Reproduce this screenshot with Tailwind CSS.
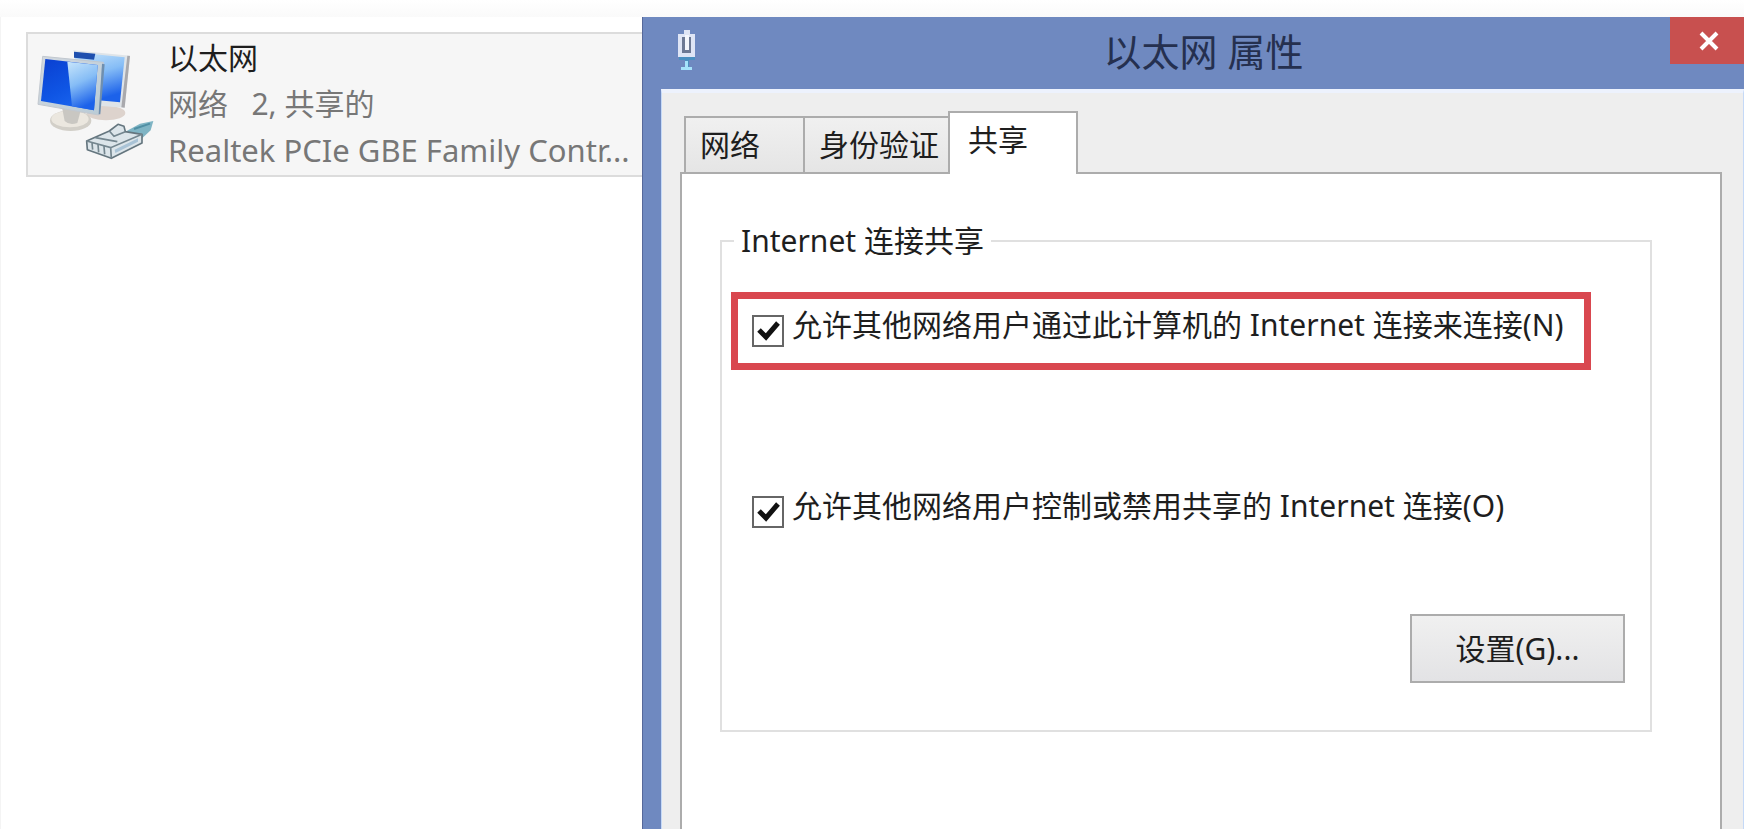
<!DOCTYPE html>
<html lang="zh-CN">
  <head>
    <meta charset="UTF-8" />
    <meta name="viewport" content="width=device-width, initial-scale=1.0" />
    <script src="https://cdn.jsdelivr.net/npm/@tailwindcss/browser@4"></script>
    <title>以太网 属性</title>
  </head>
  <body
    class="flex h-screen flex-col overflow-hidden bg-white font-['Noto_Sans','Noto_Sans_CJK_SC',sans-serif] text-[30px] leading-[46px] text-[#1e1e1e]"
  >
    <div class="h-[17px] shrink-0 bg-linear-to-b from-white to-[#fafafa]"></div>
    <div class="flex min-h-0 flex-1">
      <!-- Network connections -->
      <aside class="w-[642px] shrink-0 border-l border-[#f4f4f4] pt-[15px] pl-[25px]">
        <div
          class="flex items-center gap-2 border-2 border-r-0 border-[#dcdcdc] bg-[#f6f6f6] pt-px pb-[2px] pl-[2px]"
        >
          <svg class="size-[130px] shrink-0" viewBox="0 0 390 390" aria-hidden="true">
            <defs>
              <linearGradient id="screen" x1="0" y1="0" x2="0.6" y2="1">
                <stop offset="0" stop-color="#0a3fd0" />
                <stop offset="0.6" stop-color="#0f55e4" />
                <stop offset="1" stop-color="#1a66f0" />
              </linearGradient>
              <linearGradient id="glare" x1="0" y1="0" x2="0.3" y2="1">
                <stop offset="0" stop-color="#c9e6fb" />
                <stop offset="0.5" stop-color="#86bdf6" />
                <stop offset="1" stop-color="#1c62ea" />
              </linearGradient>
              <linearGradient id="frame" x1="0" y1="0" x2="1" y2="1">
                <stop offset="0" stop-color="#d3d9e0" />
                <stop offset="1" stop-color="#b9cbd6" />
              </linearGradient>
            </defs>
            <ellipse cx="228" cy="222" rx="58" ry="22" fill="#ddd3cd" />
            <path d="M130 34 L300 50 L284 206 L205 200 Z" fill="#dfe4e8" />
            <path d="M292 50 L300 51 L284 206 L274 205 Z" fill="#a9a9ad" />
            <path d="M134 40 L284 55 L270 190 L205 184 L134 100 Z" fill="url(#glare)" />
            <path d="M132 38 L196 44 L192 62 L132 56 Z" fill="#1e4fae" />
            <ellipse cx="122" cy="245" rx="62" ry="31" fill="#d2cfc8" />
            <ellipse cx="120" cy="240" rx="56" ry="25" fill="#ebe7df" />
            <path d="M96 205 L152 215 L142 252 Q118 260 104 246 Z" fill="#c9c7c2" />
            <path
              d="M38 52 L220 70 L206 228 L24 196 Z"
              fill="url(#frame)"
              stroke="#c2c8cf"
              stroke-width="3"
            />
            <path d="M46 60 L203 78 L192 214 L33 186 Z" fill="url(#screen)" />
            <path d="M112 68 L203 78 L192 214 L126 202 Z" fill="url(#glare)" />
            <path d="M216 74 L224 76 L211 226 L206 226 Z" fill="#6f8faf" />
            <path d="M290 276 L330 254 L370 246 L362 274 L330 304 Z" fill="#7fb4c4" />
            <path d="M312 270 L360 254" stroke="#4f8fa4" stroke-width="6" fill="none" />
            <path
              d="M170 306 L238 276 L264 256 L282 262 L286 278 L336 286 L336 312 L244 358 L172 332 Z"
              fill="#dce5ea"
              stroke="#65767f"
              stroke-width="5"
              stroke-linejoin="round"
            />
            <path
              d="M170 306 L242 326 L336 286 M242 326 L244 358 M238 276 L252 292 L286 278 M196 296 L262 308 M186 312 L188 332 M204 316 L206 340 M222 322 L224 346"
              fill="none"
              stroke="#74868f"
              stroke-width="5"
            />
            <path d="M254 332 L324 298 L324 308 L256 342 Z" fill="#a9c3d6" />
          </svg>
          <div class="min-w-0 text-[#777777]">
            <h2 class="text-[#1e1e1e]">以太网</h2>
            <p class="whitespace-pre">网络   2, 共享的</p>
            <p class="text-[31px] whitespace-nowrap">Realtek PCIe GBE Family Contr...</p>
          </div>
        </div>
      </aside>

      <!-- Properties dialog -->
      <section class="flex min-w-0 flex-1 flex-col border-l border-[#56689a] bg-[#6f89c0]">
        <header class="flex h-[72px] shrink-0 items-start">
          <svg class="mt-[13px] ml-[34px] h-[42px] w-5" viewBox="0 0 20 42" aria-hidden="true">
            <path d="M7 0 H13 V4 H18 V27 H1 V4 H7 Z" fill="#dfe5f5" />
            <path d="M5 7 H14 V23 H5 Z" fill="#6d7994" />
            <path d="M8 5 H12 V20 H8 Z" fill="#f4f6fc" />
            <path d="M2 27 H18 V30 H12 V37 H15 V40 H4 V37 H8 V30 H2 Z" fill="#4b8fc0" />
            <path d="M8 31 H11 V37 H15 V40 H4 V37 H8 Z" fill="#a5e2fb" />
          </svg>
          <h1 class="mt-1 flex-1 pl-10 text-center text-[38px] leading-[60px] text-[#25304f]">
            以太网 属性
          </h1>
          <button
            type="button"
            aria-label="关闭"
            class="flex h-[47px] w-[74px] items-center justify-center bg-[#c8504f]"
          >
            <svg class="ml-1 size-5" viewBox="0 0 20 20" aria-hidden="true">
              <path d="M2 2 L18 18 M18 2 L2 18" stroke="#ffffff" stroke-width="4" />
            </svg>
          </button>
        </header>

        <div
          class="ml-[18px] flex min-h-0 flex-1 flex-col border-x border-t-4 border-x-[#c5d9f7] border-t-[#edf2fd] bg-[#eeeeee] pt-[18px] pr-[21px] pl-[18px]"
        >
          <div role="tablist" class="z-10 -mb-[2px] flex items-end pl-1">
            <button
              type="button"
              role="tab"
              class="h-[58px] w-[121px] border-2 border-[#acacac] bg-linear-to-b from-[#f0f0f0] to-[#e5e5e5] pl-[14px] text-left"
            >
              网络
            </button>
            <button
              type="button"
              role="tab"
              class="-ml-[2px] h-[58px] w-[147px] border-2 border-[#acacac] bg-linear-to-b from-[#f0f0f0] to-[#e5e5e5] pl-[14px] text-left whitespace-nowrap"
            >
              身份验证
            </button>
            <button
              type="button"
              role="tab"
              aria-selected="true"
              class="-ml-[2px] h-[63px] w-[130px] border-2 border-b-0 border-[#acacac] bg-white pb-2 pl-[18px] text-left"
            >
              共享
            </button>
          </div>

          <div
            role="tabpanel"
            class="flex-1 border-2 border-b-0 border-[#acacac] bg-white pt-[44px] pr-[68px] pl-[38px]"
          >
            <fieldset class="flex flex-col border-2 border-[#e0e0e0] pr-[25px] pb-[47px] pl-[9px]">
              <legend class="ml-[3px] px-[7px]">Internet 连接共享</legend>
              <label
                class="mt-[28px] flex h-[78px] items-center gap-2 self-start border-[7px] border-[#d9474f] pr-5 pb-3 pl-[14px] whitespace-nowrap"
              >
                <span class="mt-3 grid">
                  <input
                    type="checkbox"
                    checked
                    class="peer col-start-1 row-start-1 size-8 appearance-none border-2 border-[#666666] bg-white"
                  />
                  <svg
                    class="pointer-events-none invisible col-start-1 row-start-1 size-8 peer-checked:visible"
                    viewBox="0 0 32 32"
                    aria-hidden="true"
                  >
                    <path d="M7 15 L14 22 L26 8" fill="none" stroke="#111111" stroke-width="5" />
                  </svg>
                </span>
                允许其他网络用户通过此计算机的 Internet 连接来连接(N)
              </label>
              <label
                class="mt-[113px] ml-[21px] flex items-center gap-2 self-start whitespace-nowrap"
              >
                <span class="mt-3 grid">
                  <input
                    type="checkbox"
                    checked
                    class="peer col-start-1 row-start-1 size-8 appearance-none border-2 border-[#666666] bg-white"
                  />
                  <svg
                    class="pointer-events-none invisible col-start-1 row-start-1 size-8 peer-checked:visible"
                    viewBox="0 0 32 32"
                    aria-hidden="true"
                  >
                    <path d="M7 15 L14 22 L26 8" fill="none" stroke="#111111" stroke-width="5" />
                  </svg>
                </span>
                允许其他网络用户控制或禁用共享的 Internet 连接(O)
              </label>
              <button
                type="button"
                class="mt-[85px] h-[69px] w-[215px] self-end border-2 border-[#acacac] bg-linear-to-b from-[#f0f0f0] to-[#e3e3e5]"
              >
                设置(G)...
              </button>
            </fieldset>
          </div>
        </div>
      </section>
    </div>
  </body>
</html>
